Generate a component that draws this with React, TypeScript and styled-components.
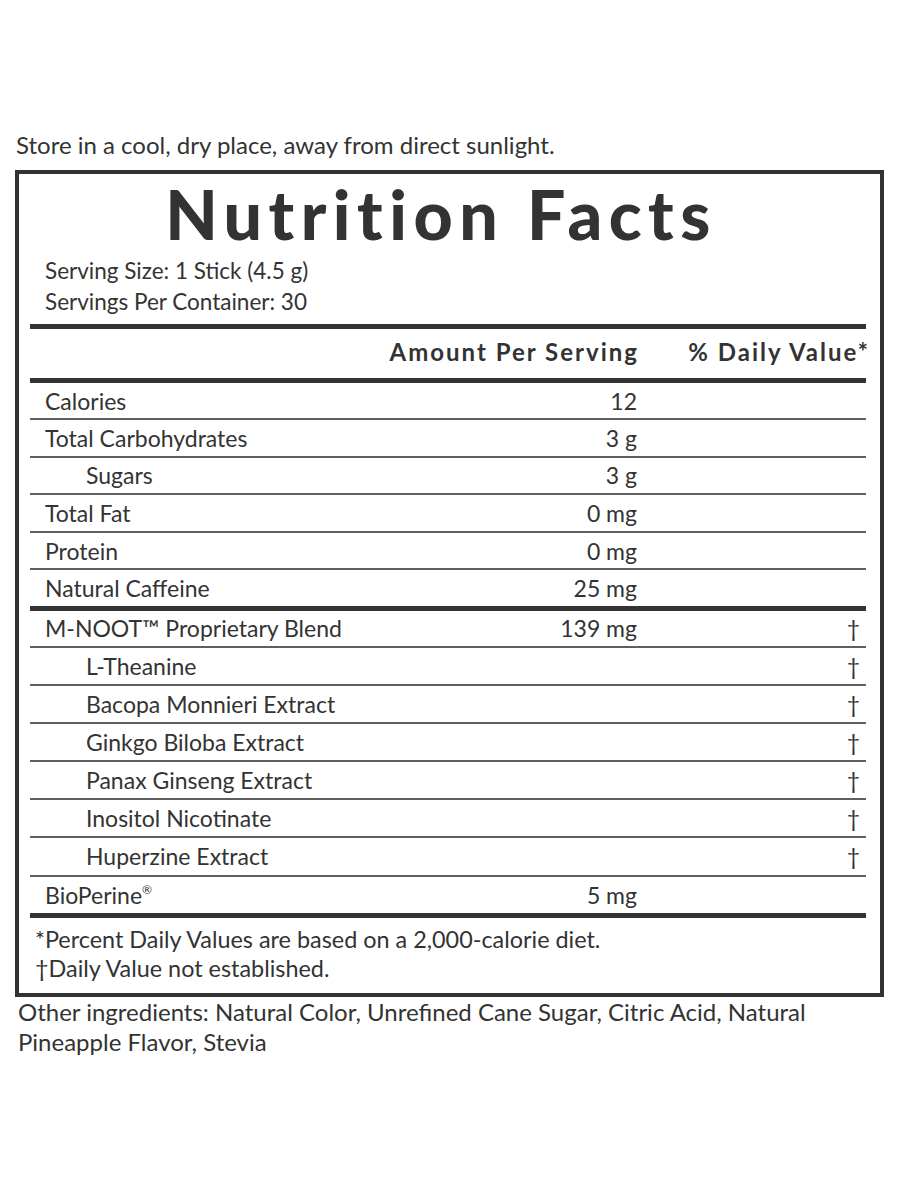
import React from "react";
import styled, { createGlobalStyle } from "styled-components";

const GlobalStyle = createGlobalStyle`
  html, body {
    margin: 0;
    padding: 0;
    background: #ffffff;
  }
  body {
    font-family: Lato, "Noto Sans", "Liberation Sans", sans-serif;
    color: #333333;
  }
`;

type Row = {
  name: string;
  amount?: string;
  dv?: string;
  sub?: boolean;
  mark?: string;
};

const basicRows: Row[] = [
  { name: "Calories", amount: "12" },
  { name: "Total Carbohydrates", amount: "3 g" },
  { name: "Sugars", amount: "3 g", sub: true },
  { name: "Total Fat", amount: "0 mg" },
  { name: "Protein", amount: "0 mg" },
  { name: "Natural Caffeine", amount: "25 mg" },
];

const blendRows: Row[] = [
  { name: "M-NOOT™ Proprietary Blend", amount: "139 mg", dv: "†" },
  { name: "L-Theanine", dv: "†", sub: true },
  { name: "Bacopa Monnieri Extract", dv: "†", sub: true },
  { name: "Ginkgo Biloba Extract", dv: "†", sub: true },
  { name: "Panax Ginseng Extract", dv: "†", sub: true },
  { name: "Inositol Nicotinate", dv: "†", sub: true },
  { name: "Huperzine Extract", dv: "†", sub: true },
  { name: "BioPerine", amount: "5 mg", mark: "®" },
];

// ============== STYLED COMPONENTS ==============

const Page = styled.div`
  width: 900px;
  min-height: 1200px;
  padding-top: 130px;
  box-sizing: border-box;
`;

const Note = styled.p`
  margin: 0 0 0 16px;
  font-size: 24px;
  line-height: 30px;
  color: #333;
`;

const Label = styled.section`
  margin: 10px 0 0 15px;
  width: 869px;
  box-sizing: border-box;
  border: 4px solid #333;
  padding: 0 14px 0 11px;
`;

const Title = styled.h1`
  margin: 0;
  padding: 5px 14px 0 0;
  text-align: center;
  font-size: 68px;
  line-height: 70px;
  font-weight: 900;
  letter-spacing: 6.5px;
  color: #333;
`;

const Serving = styled.div`
  padding: 5.5px 0 7.5px 15px;
  font-size: 22.5px;
  line-height: 31px;
`;

const ThickRule = styled.div`
  height: 5px;
  background: #333;
`;

const Grid = styled.div`
  display: grid;
  grid-template-columns: minmax(0, 1fr) 320px 229px;
  align-items: center;
`;

const HeadRow = styled(Grid)`
  height: 49px;
  box-sizing: border-box;
  padding-bottom: 4px;
  font-size: 24px;
  font-weight: 700;
  letter-spacing: 2px;
`;

const HeadCell = styled.div<{ $shift: number }>`
  text-align: right;
  white-space: nowrap;
  margin-right: ${(p) => p.$shift}px;
`;

const Body = styled.div`
  display: flex;
  flex-direction: column;
`;

const ItemRow = styled(Grid)<{ $h: number }>`
  height: ${(p) => p.$h}px;
  box-sizing: border-box;
  font-size: 23px;
  & + & {
    border-top: 2px solid #5f5f5f;
  }
  &:first-child {
    height: 35px;
  }
`;

const Name = styled.div<{ $sub?: boolean }>`
  padding-left: ${(p) => (p.$sub ? "56px" : "15px")};
  white-space: nowrap;
`;

const Amount = styled.div`
  text-align: right;
`;

const Dagger = styled.div`
  text-align: right;
  padding-right: 6px;
`;

const Mark = styled.sup`
  font-size: 12px;
  vertical-align: 10px;
  line-height: 0;
`;

const Footnotes = styled.div`
  padding: 7.5px 0 9.5px 5px;
  font-size: 23.4px;
  line-height: 29px;
`;

const Ingredients = styled.p`
  margin: 0 0 0 18px;
  width: 820px;
  font-size: 24px;
  line-height: 30px;
  color: #333;
`;

// ============== COMPONENTE ==============

const Rows: React.FC<{ rows: Row[]; h: number }> = ({ rows, h }) => (
  <Body>
    {rows.map((r) => (
      <ItemRow key={r.name} $h={h}>
        <Name $sub={r.sub}>
          {r.name}
          {r.mark && <Mark>{r.mark}</Mark>}
        </Name>
        <Amount>{r.amount}</Amount>
        <Dagger>{r.dv}</Dagger>
      </ItemRow>
    ))}
  </Body>
);

export default function App() {
  return (
    <>
      <GlobalStyle />
      <Page>
        <Note>Store in a cool, dry place, away from direct sunlight.</Note>
        <Label>
          <Title>Nutrition Facts</Title>
          <Serving>
            <div>Serving Size: 1 Stick (4.5 g)</div>
            <div>Servings Per Container: 30</div>
          </Serving>
          <ThickRule />
          <HeadRow>
            <div />
            <HeadCell $shift={-2}>Amount Per Serving</HeadCell>
            <HeadCell $shift={-4}>% Daily Value*</HeadCell>
          </HeadRow>
          <ThickRule />
          <Rows rows={basicRows} h={37.6} />
          <ThickRule />
          <Rows rows={blendRows} h={38.1} />
          <ThickRule />
          <Footnotes>
            <div>*Percent Daily Values are based on a 2,000-calorie diet.</div>
            <div>†Daily Value not established.</div>
          </Footnotes>
        </Label>
        <Ingredients>
          Other ingredients: Natural Color, Unrefined Cane Sugar, Citric Acid,
          Natural Pineapple Flavor, Stevia
        </Ingredients>
      </Page>
    </>
  );
}
